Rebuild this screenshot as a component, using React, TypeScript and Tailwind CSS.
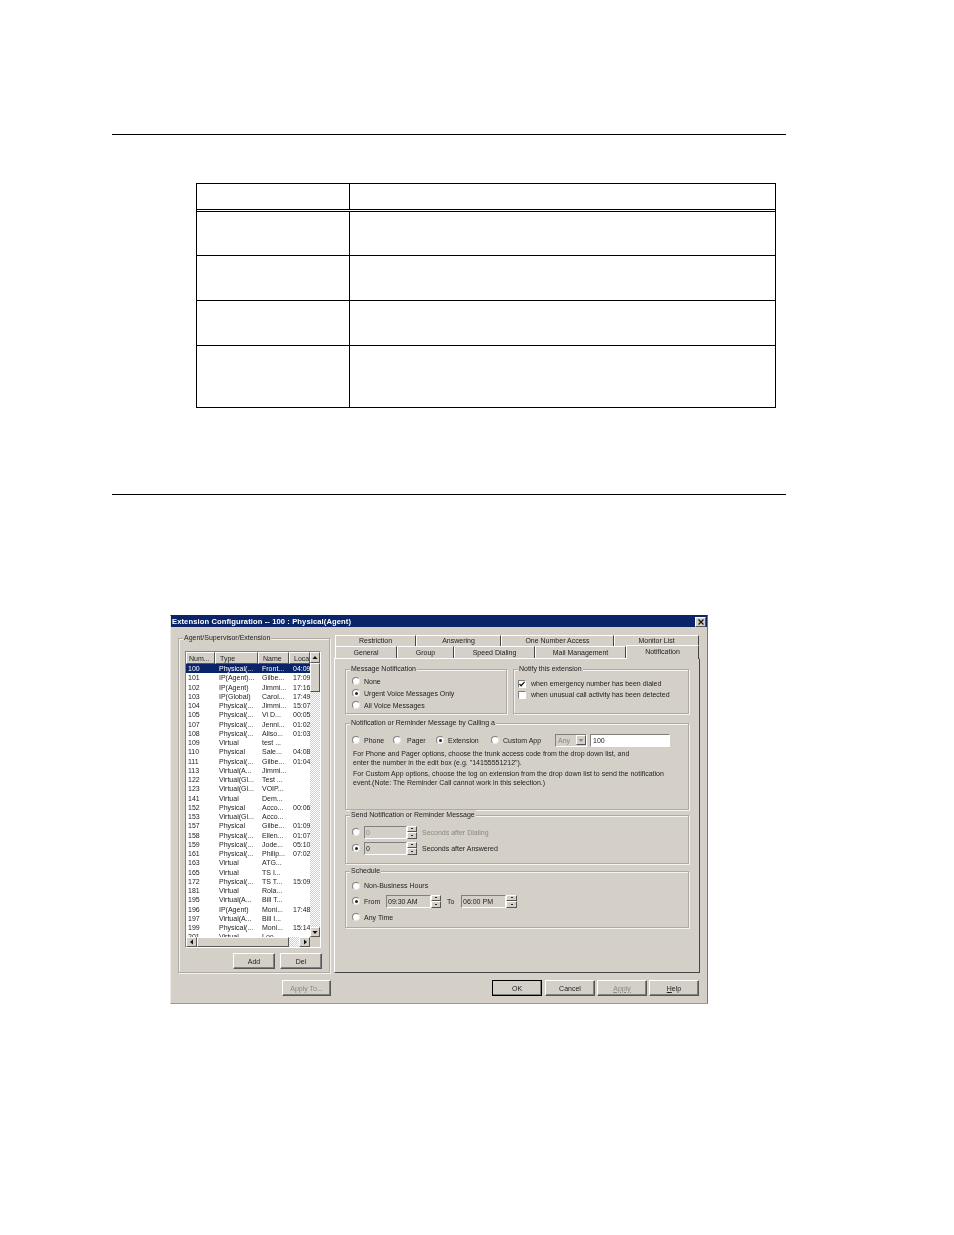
import React from "react";

const rows: [string, string, string, string][] = [
  ["100", "Physical(...", "Front...", "04:09"],
  ["101", "IP(Agent)...", "Gilbe...", "17:09"],
  ["102", "IP(Agent)", "Jimmi...", "17:16"],
  ["103", "IP(Global)", "Carol...", "17:49"],
  ["104", "Physical(...", "Jimmi...", "15:07"],
  ["105", "Physical(...", "Vi D...", "00:05"],
  ["107", "Physical(...", "Jenni...", "01:02"],
  ["108", "Physical(...", "Aliso...", "01:03"],
  ["109", "Virtual", "test ...", ""],
  ["110", "Physical", "Sale...", "04:08"],
  ["111", "Physical(...", "Gilbe...", "01:04"],
  ["113", "Virtual(A...", "Jimmi...", ""],
  ["122", "Virtual(Gl...", "Test ...", ""],
  ["123", "Virtual(Gl...", "VOIP...", ""],
  ["141", "Virtual", "Dem...", ""],
  ["152", "Physical", "Acco...", "00:06"],
  ["153", "Virtual(Gl...", "Acco...", ""],
  ["157", "Physical", "Gilbe...", "01:09"],
  ["158", "Physical(...", "Ellen...", "01:07"],
  ["159", "Physical(...", "Jode...", "05:10"],
  ["161", "Physical(...", "Philip...", "07:02"],
  ["163", "Virtual", "ATG...", ""],
  ["165", "Virtual", "TS I...", ""],
  ["172", "Physical(...", "TS T...", "15:09"],
  ["181", "Virtual", "Rola...", ""],
  ["195", "Virtual(A...", "Bill T...", ""],
  ["196", "IP(Agent)", "Moni...", "17:48"],
  ["197", "Virtual(A...", "Bill I...", ""],
  ["199", "Physical(...", "Moni...", "15:14"],
  ["201", "Virtual", "Loo...", ""],
];

const raised = "border border-t-white border-l-white border-b-[#555] border-r-[#555]";
const sunken = "border border-t-[#808080] border-l-[#808080] border-b-white border-r-white";
const dither = "bg-[repeating-conic-gradient(#d4d0c8_0_25%,#ffffff_0_50%)] bg-[length:2px_2px]";

function Group({ title, className, children }: { title: string; className: string; children?: React.ReactNode }) {
  return (
    <div className={`relative border border-[#aeaba3] shadow-[1px_1px_0_#f4f3f0,inset_1px_1px_0_#f4f3f0] ${className}`}>
      <span className="absolute left-[4px] top-[-6px] bg-[#d4d0c8] px-px leading-[10px] whitespace-nowrap">{title}</span>
      {children}
    </div>
  );
}

function Radio({ on, disabled }: { on?: boolean; disabled?: boolean }) {
  return (
    <span className="flex h-[8px] w-[8px] shrink-0 items-center justify-center rounded-full border border-t-[#808080] border-l-[#808080] border-b-[#e8e6e0] border-r-[#e8e6e0] bg-white">
      {on && <span className={`h-[3px] w-[3px] rounded-full ${disabled ? "bg-[#808080]" : "bg-[#222]"}`} />}
    </span>
  );
}

function RadioLabel({ label, on, gap = "gap-[4px]", className = "" }: { label: string; on?: boolean; gap?: string; className?: string }) {
  return (
    <div className={`flex items-center whitespace-nowrap ${gap} ${className}`}>
      <Radio on={on} />
      <span>{label}</span>
    </div>
  );
}

function Check({ on }: { on?: boolean }) {
  return (
    <span className={`flex h-[8px] w-[8px] shrink-0 items-center justify-center bg-white ${sunken}`}>
      {on && (
        <svg width="6" height="6" viewBox="0 0 7 7">
          <path d="M0.5 3.5 L2.5 5.5 L6.5 1" fill="none" stroke="#111" strokeWidth="1.5" />
        </svg>
      )}
    </span>
  );
}

function Btn({ label, className = "", disabled, strong }: { label: React.ReactNode; className?: string; disabled?: boolean; strong?: boolean }) {
  return (
    <div
      className={`flex h-[16px] items-center justify-center ${strong ? "border border-black" : raised} shadow-[inset_-1px_-1px_0_#808080] ${disabled ? "text-[#8a887f]" : ""} ${className}`}
    >
      {label}
    </div>
  );
}

function Spin({ className = "" }: { className?: string }) {
  return (
    <div className={`flex flex-col ${className}`}>
      <div className={`flex h-1/2 items-center justify-center ${raised}`}>
        <span className="h-px w-[2px] bg-[#222]" />
      </div>
      <div className={`flex h-1/2 items-center justify-center ${raised}`}>
        <span className="h-px w-[2px] bg-[#222]" />
      </div>
    </div>
  );
}

function Tab({ label, w, selected, up }: { label: string; w: string; selected?: boolean; up?: boolean }) {
  return selected ? (
    <div className={`relative z-10 -mb-px -mt-px flex h-[14px] items-center justify-center border-t border-l border-t-white border-l-white border-r border-r-[#444] bg-[#d4d0c8] pb-[2px] ${w}`}>
      {label}
    </div>
  ) : (
    <div className={`flex h-full items-center justify-center border-t border-l border-t-white border-l-white border-r border-r-[#444] ${up ? "pb-[2px]" : ""} ${w}`}>
      {label}
    </div>
  );
}

function Arrow({ d, color = "#111" }: { d: "up" | "down" | "left" | "right"; color?: string }) {
  const p = {
    up: "M0.5 4 L3 1 L5.5 4 Z",
    down: "M0.5 2 L3 5 L5.5 2 Z",
    left: "M4 0.5 L1 3 L4 5.5 Z",
    right: "M2 0.5 L5 3 L2 5.5 Z",
  }[d];
  return (
    <svg width="6" height="6" viewBox="0 0 6 6">
      <path d={p} fill={color} />
    </svg>
  );
}

function ListView() {
  return (
    <div className={`flex h-[297px] w-[136px] flex-col overflow-hidden bg-white ${sunken}`}>
      <div className="flex min-h-0 flex-1">
        <div className="flex w-[124px] flex-col overflow-hidden">
          <div className="flex h-[12px] shrink-0 bg-[#d4d0c8]">
            <div className={`flex w-[29px] items-center pl-[2px] ${raised}`}>Num...</div>
            <div className={`flex w-[43px] items-center pl-[4px] ${raised}`}>Type</div>
            <div className={`flex w-[31px] items-center pl-[4px] ${raised}`}>Name</div>
            <div className={`flex w-[21px] items-center overflow-hidden pl-[4px] ${raised}`}>Loca</div>
          </div>
          <div className="min-h-0 flex-1 overflow-hidden">
            {rows.map((r, i) => (
              <div
                key={r[0]}
                className={`flex h-[9.25px] items-center whitespace-nowrap ${i === 0 ? "bg-[#0a246a] text-white" : ""}`}
              >
                <span className="w-[33px] pl-[2px]">{r[0]}</span>
                <span className="w-[43px]">{r[1]}</span>
                <span className="w-[31px]">{r[2]}</span>
                <span className="w-[17px] overflow-hidden">{r[3]}</span>
              </div>
            ))}
          </div>
        </div>
        <div className={`flex w-[10px] flex-col ${dither}`}>
          <div className={`flex h-[11px] items-center justify-center bg-[#d4d0c8] ${raised}`}><Arrow d="up" /></div>
          <div className={`h-[29px] bg-[#d4d0c8] ${raised}`} />
          <div className="flex-1" />
          <div className={`flex h-[10px] items-center justify-center bg-[#d4d0c8] ${raised}`}><Arrow d="down" /></div>
        </div>
      </div>
      <div className="flex h-[10px] shrink-0">
        <div className={`flex w-[11px] items-center justify-center bg-[#d4d0c8] ${raised}`}><Arrow d="left" /></div>
        <div className={`w-[92px] bg-[#d4d0c8] ${raised}`} />
        <div className={`w-[10px] ${dither}`} />
        <div className={`flex w-[11px] items-center justify-center bg-[#d4d0c8] ${raised}`}><Arrow d="right" /></div>
        <div className="flex-1 bg-[#d4d0c8]" />
      </div>
    </div>
  );
}

function Dialog() {
  return (
    <div className="ml-[170px] mt-[120px] h-[389px] w-[538px] border border-[#ecebe6] border-t-[#0a246a] border-r-[#777] border-b-[#999] bg-[#d4d0c8] font-['Liberation_Sans',sans-serif] text-[7px] leading-[9px] text-[#222] [filter:blur(0.25px)]">
      <div className="flex h-[11px] items-center justify-between bg-[#0a246a] pl-[1px] pr-[1px] text-[7.6px] font-bold text-white">
        <span className="tracking-[0.1px]">Extension Configuration -- 100 : Physical(Agent)</span>
        <span className={`flex h-[10px] w-[11px] items-center justify-center bg-[#d4d0c8] ${raised}`}>
          <svg width="6" height="6" viewBox="0 0 6 6"><path d="M0.5 0.5 L5.5 5.5 M5.5 0.5 L0.5 5.5" stroke="#111" strokeWidth="1.2" /></svg>
        </span>
      </div>

      <div className="mt-px flex pl-[7px]">
        <Group title="Agent/Supervisor/Extension" className="mt-[10px] h-[335px] w-[152px] pl-[6px] pt-[12px]">
          <ListView />
          <div className="mt-[5px] flex gap-[5px] pl-[48px]">
            <Btn label="Add" className="w-[42px]" />
            <Btn label="Del" className="w-[42px]" />
          </div>
        </Group>

        <div className="ml-[4px] mt-[7px] flex w-[366px] flex-col">
          <div className="flex h-[11px] pl-[1px]">
            <Tab label="Restriction" w="w-[81px]" up />
            <Tab label="Answering" w="w-[85px]" up />
            <Tab label="One Number Access" w="w-[113px]" up />
            <Tab label="Monitor List" w="w-[85px]" up />
          </div>
          <div className="flex h-[12px] pl-[1px]">
            <Tab label="General" w="w-[62px]" />
            <Tab label="Group" w="w-[57px]" />
            <Tab label="Speed Dialing" w="w-[81px]" />
            <Tab label="Mail Management" w="w-[91px]" />
            <Tab label="Notification" w="w-[73px]" selected />
          </div>
          <div className="h-[315px] border border-t-white border-l-white border-r-[#444] border-b-[#444] pl-[10px] pt-[10px]">
            <div className="flex gap-[6px]">
              <Group title="Message Notification" className="h-[45px] w-[162px] pl-[6px] pt-[5px]">
                <RadioLabel label="None" className="h-[12px]" />
                <RadioLabel label="Urgent Voice Messages Only" on className="h-[12px]" />
                <RadioLabel label="All Voice Messages" className="h-[12px]" />
              </Group>
              <Group title="Notify this extension" className="h-[45px] w-[176px] pl-[4px] pt-[8px]">
                <div className="flex h-[11px] items-center gap-[5px] whitespace-nowrap"><Check on /><span>when emergency number has been dialed</span></div>
                <div className="flex h-[11px] items-center gap-[5px] whitespace-nowrap"><Check /><span>when unusual call activity has been detected</span></div>
              </Group>
            </div>

            <Group title="Notification or Reminder Message by Calling a" className="mt-[9px] h-[87px] w-[344px] pl-[6px] pt-[9px]">
              <div className="flex h-[14px] items-center">
                <RadioLabel label="Phone" className="w-[41px]" />
                <RadioLabel label="Pager" gap="gap-[6px]" className="w-[43px]" />
                <RadioLabel label="Extension" on className="w-[55px]" />
                <RadioLabel label="Custom App" className="w-[64px]" />
                <div className={`flex h-[13px] w-[32px] items-center justify-between bg-[#d4d0c8] pl-[2px] text-[#8a887f] ${sunken}`}>
                  <span>Any</span>
                  <span className={`flex h-[10px] w-[10px] items-center justify-center ${raised}`}><Arrow d="down" color="#8a887f" /></span>
                </div>
                <div className={`ml-[3px] flex h-[13px] w-[80px] items-center bg-white pl-[2px] ${sunken}`}>100</div>
              </div>
              <div className="ml-px mt-[2px] w-[330px] leading-[9px]">
                <p className="whitespace-nowrap">For Phone and Pager options, choose the trunk access code from the drop down list, and</p>
                <p className="whitespace-nowrap">enter the number in the edit box (e.g. "14155551212").</p>
                <p className="mt-[2px] whitespace-nowrap">For Custom App options, choose the log on extension from the drop down list to send the notification</p>
                <p className="whitespace-nowrap">event.(Note: The Reminder Call cannot work in this selection.)</p>
              </div>
            </Group>

            <Group title="Send Notification or Reminder Message" className="mt-[5px] h-[49px] w-[344px] pl-[6px] pt-[9px]">
              <div className="flex h-[14px] items-center text-[#8a887f]">
                <Radio disabled />
                <div className={`ml-[4px] flex h-[13px] w-[43px] items-center pl-[1px] ${sunken}`}>0</div>
                <Spin className="h-[13px] w-[10px]" />
                <span className="ml-[5px] whitespace-nowrap">Seconds after Dialing</span>
              </div>
              <div className="mt-[2px] flex h-[14px] items-center">
                <Radio on />
                <div className={`ml-[4px] flex h-[13px] w-[43px] items-center pl-[1px] ${sunken}`}>0</div>
                <Spin className="h-[13px] w-[10px]" />
                <span className="ml-[5px] whitespace-nowrap">Seconds after Answered</span>
              </div>
            </Group>

            <Group title="Schedule" className="mt-[7px] h-[57px] w-[344px] pl-[6px] pt-[7px]">
              <RadioLabel label="Non-Business Hours" className="h-[13px]" />
              <div className="mt-[2px] flex h-[14px] items-center">
                <RadioLabel label="From" on className="w-[34px]" />
                <div className={`flex h-[13px] w-[45px] items-center pl-[1px] ${sunken}`}>09:30 AM</div>
                <Spin className="h-[13px] w-[10px]" />
                <span className="ml-[6px] w-[14px]">To</span>
                <div className={`flex h-[13px] w-[45px] items-center pl-[1px] ${sunken}`}>06:00 PM</div>
                <Spin className="h-[13px] w-[11px]" />
              </div>
              <RadioLabel label="Any Time" className="mt-[3px] h-[12px]" />
            </Group>
          </div>
        </div>
      </div>

      <div className="mt-[7px] flex pl-[111px]">
        <Btn label="Apply To..." disabled className="w-[49px]" />
        <Btn label="OK" strong className="ml-[161px] w-[50px]" />
        <Btn label="Cancel" className="ml-[3px] w-[50px]" />
        <Btn label={<span className="underline">Apply</span>} disabled className="ml-[2px] w-[50px]" />
        <Btn label={<span><span className="underline">H</span>elp</span>} className="ml-[2px] w-[50px]" />
      </div>
    </div>
  );
}

function Row({ h, last }: { h: string; last?: boolean }) {
  return (
    <div className={`flex ${h} ${last ? "" : "border-b border-black"}`}>
      <div className="w-[153px] border-r border-black" />
      <div className="flex-1" />
    </div>
  );
}

export default function App() {
  return (
    <div className="h-[1235px] w-[954px] overflow-hidden bg-white pt-[134px]">
      <div className="ml-[112px] h-px w-[674px] bg-black" />
      <div className="ml-[196px] mt-[48px] w-[580px] border border-black">
        <div className="flex h-[28px] border-b-[3px] border-double border-black">
          <div className="w-[153px] border-r border-black" />
          <div className="flex-1" />
        </div>
        <Row h="h-[44px]" />
        <Row h="h-[45px]" />
        <Row h="h-[45px]" />
        <Row h="h-[61px]" last />
      </div>
      <div className="ml-[112px] mt-[86px] h-px w-[674px] bg-black" />
      <Dialog />
    </div>
  );
}
